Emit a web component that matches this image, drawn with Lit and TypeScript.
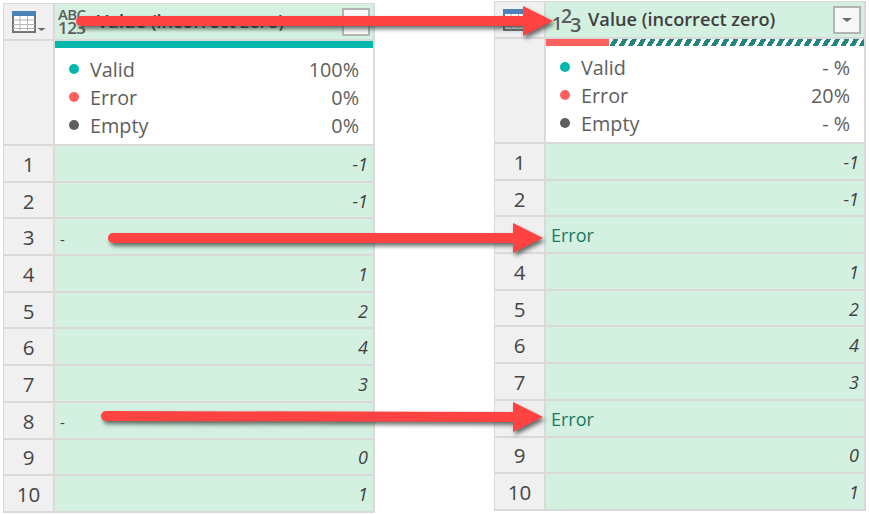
import { LitElement, html, css, svg } from 'lit';
import { customElement, property } from 'lit/decorators.js';

type Cell = { text: string; kind: 'num' | 'dash' | 'error' };

const num = (text: string): Cell => ({ text, kind: 'num' });
const dash: Cell = { text: '-', kind: 'dash' };
const err: Cell = { text: 'Error', kind: 'error' };

const LEFT_ROWS = [num('-1'), num('-1'), dash, num('1'), num('2'), num('4'), num('3'), dash, num('0'), num('1')];
const RIGHT_ROWS = [num('-1'), num('-1'), err, num('1'), num('2'), num('4'), num('3'), err, num('0'), num('1')];

@customElement('query-column')
export class QueryColumn extends LitElement {
  @property({ type: Array })
  rows: Cell[] = [];

  @property({ type: Array })
  stats: string[] = [];

  @property({ type: String })
  type = 'any';

  static override styles = css`
    :host {
      display: block;
      width: 372px;
      font-family: 'Open Sans', 'Noto Sans', sans-serif;
    }

    .grid {
      display: grid;
      grid-template-columns: 49px 318px;
      grid-template-rows: 35px 103px repeat(10, 34.7px);
      gap: 2px;
      background: #d9d9d9;
      padding: 1px 2px 2px 1px;
    }

    .index {
      background: #f0f0f0;
      color: #454545;
      font-size: 20.5px;
      padding-top: 1px;
      display: flex;
      align-items: center;
      justify-content: center;
    }

    .corner {
      display: flex;
      align-items: center;
      padding: 0 0 0 8px;
      justify-content: flex-start;
    }

    .head {
      background: #d4f0e0;
      display: flex;
      align-items: center;
      padding: 0 3px 0 3px;
      color: #3f3f3f;
      font-size: 18.2px;
      font-weight: 600;
      white-space: nowrap;
    }

    .head .title {
      flex: 1;
      margin-left: 9px;
      margin-top: -1px;
    }

    .filter {
      width: 24px;
      height: 24px;
      border: 2px solid #b3b3b3;
      background: #f8f8f8;
      display: flex;
      align-items: center;
      justify-content: center;
    }

    .stats {
      background: #fff;
      display: flex;
      flex-direction: column;
    }

    .bar {
      height: 7px;
      background: #01b8aa;
    }

    .bar.mixed {
      background: linear-gradient(90deg, #fd625e 63px, transparent 63px),
        repeating-linear-gradient(-60deg, #23857c 0 4.5px, #fff 4.5px 8px);
    }

    .legend {
      padding: 7px 14px 0 14px;
      display: grid;
      grid-template-columns: 10px 1fr auto;
      grid-auto-rows: 28px;
      align-items: center;
      column-gap: 11px;
      color: #605e5c;
      font-size: 19.8px;
    }

    .legend .value {
      justify-self: end;
    }

    .dot {
      width: 10px;
      height: 10px;
      border-radius: 50%;
    }

    .data {
      background: #d4f0e0;
      display: flex;
      align-items: center;
      padding: 0 5px 0 5px;
      font-size: 18px;
      color: #404040;
    }

    .data.num {
      justify-content: flex-end;
      font-style: italic;
      padding-top: 1px;
    }

    .data.dash {
      padding-top: 4px;
      font-size: 15px;
    }

    .data.error {
      color: #1a7a62;
      padding-top: 1px;
    }

    svg {
      display: block;
      overflow: visible;
    }

    .type text {
      font-family: 'Open Sans', sans-serif;
      fill: #5c5c5c;
    }
  `;

  private renderTableIcon() {
    return html`<svg width="36" height="22" viewBox="0 0 36 22">
      <rect x="1" y="1" width="22" height="20" fill="#fff" stroke="#737373" stroke-width="2" />
      <path d="M1 9h22M1 13.5h22M1 17.5h22M8 5v16M15.5 5v16" stroke="#b5b5b5" fill="none" />
      <rect x="0" y="0" width="23" height="5" fill="#4d82b8" />
      <path d="M25.5 17h8l-4 3z" fill="#6b6b6b" />
    </svg>`;
  }

  private renderTypeIcon() {
    if (this.type === 'any') {
      return html`<svg class="type" width="30" height="32" viewBox="0 0 30 32">
        <text x="0" y="13.5" font-size="15" textLength="28">ABC</text>
        <text x="0" y="28" font-size="17" textLength="28">123</text>
      </svg>`;
    }
    return html`<svg class="type" width="30" height="32" viewBox="0 0 30 32">
      ${svg`<text x="3" y="25.5" font-size="18">1</text>
        <text x="12" y="18.5" font-size="19.5">2</text>
        <text x="21" y="27.5" font-size="20">3</text>`}
    </svg>`;
  }

  override render() {
    const labels = ['Valid', 'Error', 'Empty'];
    const colors = ['#01b8aa', '#fd625e', '#5f5f5f'];
    return html`
      <div class="grid">
        <div class="index corner">${this.renderTableIcon()}</div>
        <div class="head">
          ${this.renderTypeIcon()}
          <span class="title">Value (incorrect zero)</span>
          <div class="filter">
            <svg width="12" height="6" viewBox="0 0 12 6"><path d="M1 1h10L6 5z" fill="#6b6b6b" /></svg>
          </div>
        </div>
        <div class="index"></div>
        <div class="stats">
          <div class="bar ${this.type === 'any' ? '' : 'mixed'}"></div>
          <div class="legend">
            ${labels.map(
              (label, i) => html`
                <span class="dot" style="background:${colors[i]}"></span>
                <span>${label}</span>
                <span class="value">${this.stats[i]}</span>
              `
            )}
          </div>
        </div>
        ${this.rows.map(
          (row, i) => html`
            <div class="index">${i + 1}</div>
            <div class="data ${row.kind}">${row.text}</div>
          `
        )}
      </div>
    `;
  }
}

@customElement('app-root')
export class AppRoot extends LitElement {
  static override styles = css`
    :host {
      display: block;
      position: relative;
      width: 870px;
      height: 514px;
      overflow: hidden;
      background: #fff;
    }

    .columns {
      display: flex;
      align-items: flex-start;
      gap: 119px;
      padding: 1px 0 0 3px;
    }

    .columns query-column:first-child {
      margin-top: 2px;
    }

    .arrows {
      position: absolute;
      left: 0;
      top: 0;
      filter: drop-shadow(2px 3px 2px rgba(40, 50, 45, 0.7));
    }
  `;

  private arrow(x1: number, y1: number, y2: number, base: number, tip: number) {
    return svg`
      <path d="M${x1} ${y1}L${base} ${y2}" stroke="#ff4343" stroke-width="10" stroke-linecap="round" fill="none" />
      <path d="M${base} ${y2 - 15}L${tip} ${y2}L${base} ${y2 + 15}z" fill="#ff4343" />
    `;
  }

  override render() {
    return html`
      <div class="columns">
        <query-column type="any" .rows=${LEFT_ROWS} .stats=${['100%', '0%', '0%']}></query-column>
        <query-column type="int" .rows=${RIGHT_ROWS} .stats=${['- %', '20%', '- %']}></query-column>
      </div>
      <svg class="arrows" width="870" height="514" viewBox="0 0 870 514">
        ${this.arrow(81, 21, 21, 523, 553)}
        ${this.arrow(113, 238, 238, 513, 543)}
        ${this.arrow(106, 416, 417, 513, 543)}
      </svg>
    `;
  }
}

declare global {
  interface HTMLElementTagNameMap {
    'app-root': AppRoot;
    'query-column': QueryColumn;
  }
}
